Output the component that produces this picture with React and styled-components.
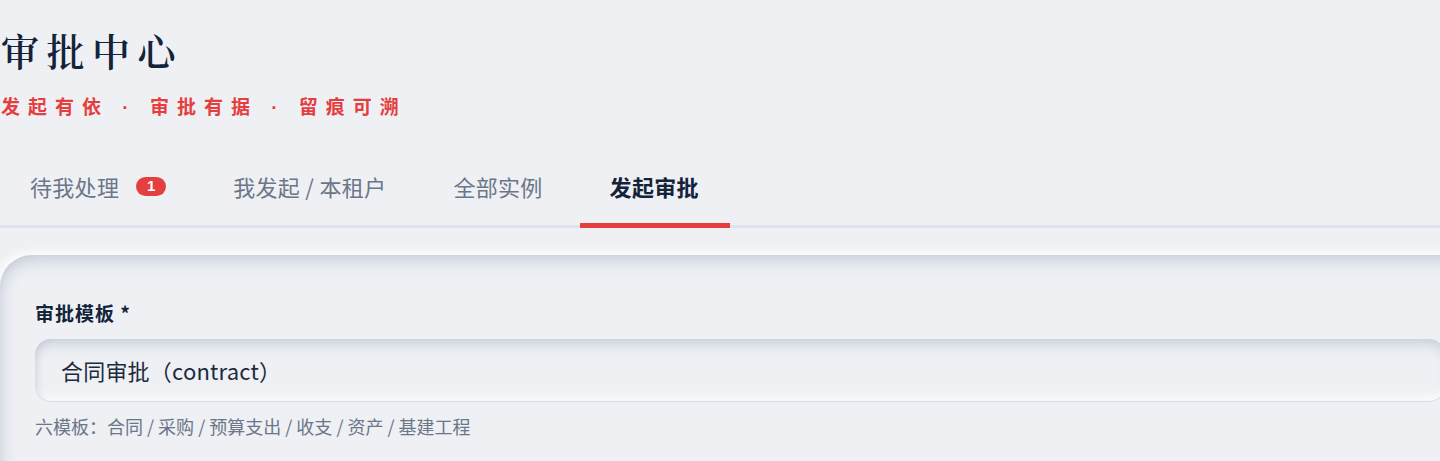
import React from 'react';
import styled, { createGlobalStyle } from 'styled-components';

const GlobalStyle = createGlobalStyle`
  html, body {
    margin: 0;
    padding: 0;
    background: #eef0f4;
    overflow: hidden;
  }
  body {
    font-family: "Noto Sans CJK SC", "Noto Sans", sans-serif;
  }
`;

const tabs = [
    { label: '待我处理', badge: 1 },
    { label: '我发起 / 本租户' },
    { label: '全部实例' },
    { label: '发起审批', active: true },
];

const motto = ['发起有依', '审批有据', '留痕可溯'];

function App() {
    return (
        <Page>
            <GlobalStyle />
            <Header>
                <Title>审批中心</Title>
                <Motto>
                    {motto.map((part, i) => (
                        <React.Fragment key={part}>
                            {i > 0 && <Dot> · </Dot>}
                            {part}
                        </React.Fragment>
                    ))}
                </Motto>
            </Header>

            <TabBar>
                {tabs.map((tab) => (
                    <Tab key={tab.label} active={tab.active}>
                        {tab.label}
                        {tab.badge && <Badge>{tab.badge}</Badge>}
                    </Tab>
                ))}
            </TabBar>

            <Card>
                <Label>审批模板 *</Label>
                <Field>合同审批（contract）</Field>
                <Hint>六模板：合同 / 采购 / 预算支出 / 收支 / 资产 / 基建工程</Hint>
            </Card>
        </Page>
    );
}

export default App;

const Page = styled.div`
    display: flex;
    flex-direction: column;
    width: 1480px;
`;

const Header = styled.header`
    display: flex;
    flex-direction: column;
    padding: 27px 0 0 1px;
`;

const Title = styled.h1`
    margin: 0;
    font-family: "Noto Serif CJK SC", "Source Han Serif SC", "Noto Sans CJK SC", serif;
    font-size: 38px;
    line-height: 46px;
    font-weight: 600;
    letter-spacing: 7.5px;
    color: #13233a;
`;

const Motto = styled.div`
    margin-top: 19px;
    font-size: 19px;
    line-height: 28px;
    font-weight: 700;
    letter-spacing: 8px;
    color: #e53e3e;
    white-space: pre;
`;

const Dot = styled.span`
    font-family: "Liberation Sans", sans-serif;
`;

const TabBar = styled.nav`
    display: flex;
    gap: 6px;
    margin-top: 29px;
    border-bottom: 3px solid #dde2ec;
`;

const Tab = styled.div`
    position: relative;
    display: flex;
    align-items: center;
    gap: 17px;
    padding: 20px 31px 24px 30px;
    font-size: 22px;
    line-height: 30px;
    letter-spacing: 0.3px;
    font-weight: ${(p) => (p.active ? 700 : 400)};
    color: ${(p) => (p.active ? '#13233a' : '#6b7689')};

    &::after {
        content: '';
        display: ${(p) => (p.active ? 'block' : 'none')};
        position: absolute;
        left: 0;
        right: 0;
        bottom: -3px;
        height: 5px;
        background: #e53e3e;
    }
`;

const Badge = styled.span`
    display: inline-flex;
    align-items: center;
    justify-content: center;
    width: 30px;
    height: 19px;
    border-radius: 10px;
    background: #e53e3e;
    color: #fff;
    font-family: "Liberation Sans", sans-serif;
    font-size: 15px;
    font-weight: 700;
    letter-spacing: 0;
`;

const Card = styled.section`
    display: flex;
    flex-direction: column;
    margin-top: 27px;
    padding: 44px 35px 30px;
    border-radius: 32px 0 0 0;
    background: #eef0f4;
    box-shadow:
        inset 0 14px 18px -10px rgba(160, 172, 192, 0.55),
        inset 10px 0 16px -10px rgba(160, 172, 192, 0.45),
        -3px -3px 8px rgba(255, 255, 255, 0.9);
`;

const Label = styled.label`
    font-size: 19px;
    line-height: 28px;
    font-weight: 700;
    letter-spacing: 1px;
    color: #13233a;
`;

const Field = styled.div`
    display: flex;
    align-items: center;
    margin-top: 12px;
    height: 62px;
    padding: 0 26px;
    border-radius: 16px;
    background: #eef0f4;
    font-size: 22px;
    letter-spacing: 0.2px;
    color: #1c2a3d;
    box-shadow:
        inset 0 10px 14px -6px rgba(160, 172, 192, 0.55),
        inset 6px 0 10px -6px rgba(160, 172, 192, 0.4),
        inset 0 -8px 10px -4px rgba(255, 255, 255, 0.95),
        0 1px 0 #d6dbe5;
`;

const Hint = styled.div`
    margin-top: 12px;
    font-size: 18px;
    line-height: 26px;
    color: #6b7689;
`;
